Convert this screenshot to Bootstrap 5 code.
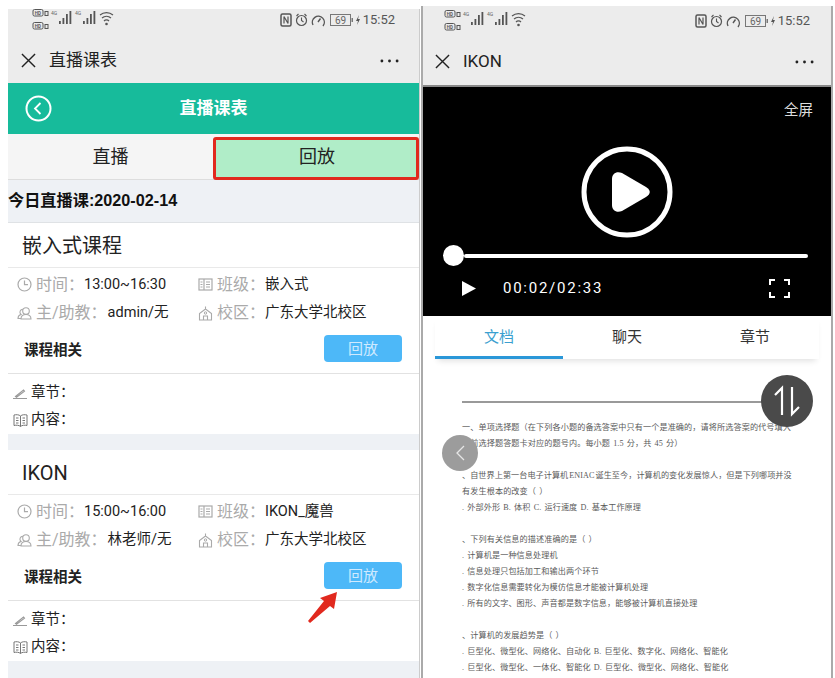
<!DOCTYPE html>
<html lang="zh">
<head>
<meta charset="utf-8">
<title>直播课表</title>
<link rel="stylesheet" href="https://cdn.jsdelivr.net/npm/bootstrap@5.3.0/dist/css/bootstrap.min.css">
<style>
html,body{height:678px;overflow:hidden}
body{background:#fff;font-family:Roboto,"Noto Sans CJK SC",sans-serif;color:#222}
.stage{padding-left:8px;height:678px}
.phone-l{width:412px;margin-top:9px;background:#eef1f5;border-right:1px solid #ccc;flex:none;position:relative}
.phone-r{width:412px;margin-top:6px;margin-left:1px;background:#fff;border-left:2px solid #aaa;border-right:2px solid #aaa;flex:none;position:relative}
.sbar{height:31px;background:#ececec;padding:0 24px 9px;color:#555;font-size:13px}
.phone-r .sbar{height:34px;padding:0 21px 4px 21px}
.tbar{height:43px;background:#ececec;padding:0 20px 2px 13px;font-size:17px;color:#222;gap:13px}
.phone-r .tbar{height:47px;padding:0 17px 2px 12px;border-bottom:2px solid #888;gap:13px}
.dots{margin-left:auto}
.teal{height:51px;background:#17bb9b;color:#fff;font-size:17px;font-weight:700;position:relative}
.teal svg{position:absolute;left:17px;top:12px}
.tabs-l{height:46px;background:#f5f5f5;border-bottom:1px solid #ddd;flex-wrap:nowrap}
.tab-a{width:205px;font-size:18px;color:#222}
.tab-b{flex:1;font-size:18px;color:#222;background:#b0edc8;border:3px solid #e1291e;border-radius:3px;margin-top:3px;margin-bottom:-1px;padding:0 0 4px 2px}
.dayline{height:43px;padding-bottom:2px;font-size:16.2px;font-weight:700;color:#111;border-bottom:1px solid #dfe2e5;font-family:"Liberation Sans","Noto Sans CJK SC",sans-serif}
.course{border:0;border-radius:0;margin-bottom:16px;height:211px;color:#222}
.ctitle{height:46px;padding:1px 0 0 14px;font-size:20px;border-bottom:1px solid #e9e9e9}
.crow{height:29px;font-size:14.5px;padding-left:9px;white-space:nowrap}
.crow1{margin-top:2px}
.cgray{color:#aaa;font-size:16px}
.cell1{width:181px}
.cell1 svg,.cell2 svg{margin-right:4px;flex:none}
.cval2{margin-left:1px}
.rel{height:47px;padding:3px 17px 0 16px;border-bottom:1px solid #e2e2e2;font-size:14.5px;font-weight:700;margin-bottom:5px}
.rel-t{margin-top:-2px}
.replay{width:78px;height:27px;padding:0;background:#4db8f8;border:0;border-radius:4px;color:#cfeaff;font-size:15px;line-height:24px;margin-top:-6px}
.cnote{height:28px;padding-left:5px;font-size:14.5px;gap:3px}
.arrow{position:absolute;left:299px;top:581px}
.video{height:229px;background:#000;color:#fff}
.fulltxt{height:59px;padding:13px 18px 0 0;font-size:14.5px;color:#ddd;text-align:right}
.bigplay{height:90px}
.slider{height:21px;margin-top:9px;padding:0 23px 0 20px}
.thumb{width:21px;height:21px;border-radius:50%;background:#fff;flex:none}
.track{height:4px;background:#fff;flex:1;border-radius:2px}
.ctrls{padding:11px 41px 0 39px;gap:27px;font-size:15px;letter-spacing:1.75px}
.ctrls svg:last-child{margin-left:auto}
.tabs-r{margin:0 12px;height:43px;box-shadow:0 5px 6px -3px rgba(0,0,0,.12);flex-wrap:nowrap}
.tabs-r .nav-item{width:128px;text-align:center;font-size:15px;color:#333;line-height:42px}
.tabs-r .on{color:#3a9fd0;border-bottom:3px solid #2a97d8;height:43px}
.doc{padding:42px 0 0 39px;color:#5a5a5a;font-family:"Liberation Serif","Noto Sans CJK SC",serif;font-size:8.15px;letter-spacing:.1px;word-spacing:1px;line-height:16px;white-space:nowrap}
.docrule{height:2px;width:331px;background:#999;margin-bottom:17px}
.doc p{margin:0}
.doc .gapl{margin-top:16px}
.doc .tight{word-spacing:-1px;letter-spacing:.05px}
.swap{position:absolute;left:338px;top:369px;width:52px;height:52px;border-radius:50%;background:#4a4a4a}
.prev{position:absolute;left:19px;top:429px;width:36px;height:36px;border-radius:50%;background:#9c9c9c}
.tiny-a{fill:#555;font-family:Roboto,sans-serif;font-size:4.5px;font-weight:700}
.tiny-b{fill:#666;font-family:Roboto,sans-serif;font-size:5px}
.tiny-c{fill:#666;font-family:Roboto,sans-serif;font-size:10px}
</style>
</head>
<body>
<svg width="0" height="0" class="position-absolute">
<symbol id="sl" viewBox="0 0 82 24">
 <g fill="none" stroke="#555" stroke-width="1"><rect x="1" y="1.500" width="10" height="6.500" rx="1.500"/><rect x="1" y="14.500" width="10" height="6.500" rx="1.500"/><rect x="13" y="3.500" width="3" height="4"/><rect x="13" y="16.500" width="3" height="4"/></g>
 <g fill="#555"><rect x="27" y="13" width="1.800" height="3"/><rect x="30.500" y="10" width="1.800" height="6"/><rect x="34" y="6" width="1.800" height="10"/><rect x="37.500" y="3" width="1.800" height="13"/><rect x="51" y="13" width="1.800" height="3"/><rect x="54.500" y="10" width="1.800" height="6"/><rect x="58" y="6" width="1.800" height="10"/><rect x="61.500" y="3" width="1.800" height="13"/></g>
 <g fill="none" stroke="#555" stroke-width="1.200"><path d="M68 7a10 10 0 0 1 13 0M70 10a7 7 0 0 1 9 0M72 13a3.500 3.500 0 0 1 5 0"/></g><circle cx="74.500" cy="16" r="1.300" fill="#555"/>
</symbol>
<symbol id="sr" viewBox="0 0 83 14">
 <rect x="1" y="1" width="10" height="12" rx="1.500" fill="none" stroke="#555" stroke-width="1.500"/><path d="M4 3.500v7M8 3.500v7M4 3.500l4 7" stroke="#555" fill="none" stroke-width="1.200"/>
 <circle cx="21.500" cy="7.500" r="5" fill="none" stroke="#555" stroke-width="1.200"/><path d="M21.500 4.500v3l2 1.500M16.500 3l2-2M26.500 3l-2-2" fill="none" stroke="#555" stroke-width="1.100"/>
 <path d="M33 12a6 6 0 1 1 10 1M38 9l2.500-3.500" fill="none" stroke="#555" stroke-width="1.400"/>
 <rect x="50.500" y="1.500" width="20" height="11" fill="none" stroke="#777" stroke-width="1"/><rect x="71.500" y="5" width="1.500" height="4" fill="#777"/>
 <path d="M79 2l-3 6h2l-1 4 3-6h-2z" fill="#555"/>
</symbol>
<symbol id="ico-x" viewBox="0 0 16 16"><path d="M1 1l14 14M15 1L1 15" stroke="#222" stroke-width="1.500" fill="none"/></symbol>
<symbol id="ico-dots" viewBox="0 0 20 4"><circle cx="2" cy="2" r="1.500" fill="#222"/><circle cx="10" cy="2" r="1.500" fill="#222"/><circle cx="18" cy="2" r="1.500" fill="#222"/></symbol>
<symbol id="ico-clock" viewBox="0 0 15 15"><circle cx="7.500" cy="7.500" r="6.500" fill="none" stroke="#aaa" stroke-width="1.200"/><path d="M7.500 3.500v4.200h3.500" fill="none" stroke="#aaa" stroke-width="1.200"/></symbol>
<symbol id="ico-class" viewBox="0 0 15 15"><rect x="1" y="2" width="13" height="11" fill="none" stroke="#aaa" stroke-width="1.200"/><path d="M6 2v11M8 5h4M8 7.500h4M8 10h4M2.500 5h2M2.500 7.500h2M2.500 10h2" fill="none" stroke="#aaa" stroke-width="1.200"/></symbol>
<symbol id="ico-users" viewBox="0 0 15 15"><circle cx="9" cy="5" r="3.300" fill="none" stroke="#aaa" stroke-width="1.100"/><path d="M4 13c0-3 2-4.500 5-4.500s5 1.500 5 4.500zM6 3.200A3 3 0 0 0 4 8.500C2 9 1 10.500 1 12.500h3" fill="none" stroke="#aaa" stroke-width="1.100"/></symbol>
<symbol id="ico-school" viewBox="0 0 15 15"><path d="M1.500 14V7.500L7.500 3l6 4.500V14zM7.500 3V.5M5.500 14v-4h4v4" fill="none" stroke="#aaa" stroke-width="1.100"/><circle cx="7.500" cy="7" r="1.200" fill="none" stroke="#aaa"/></symbol>
<symbol id="ico-pen" viewBox="0 0 15 15"><path d="M2.500 11.500l8-6.500 1 1.200-8 6zM0 13.500h14" fill="none" stroke="#999" stroke-width="1.100"/></symbol>
<symbol id="ico-book" viewBox="0 0 15 15"><path d="M7.500 3C6 1.500 3 1.500 1 2v10.500c2-.5 5-.5 6.500 1 1.500-1.500 4.500-1.500 6.500-1V2c-2-.5-5-.5-6.500 1zM7.500 3v10.500M3 5h2.500M3 7.500h2.500M3 10h2.500M9.500 5H12M9.500 7.500H12M9.500 10H12" fill="none" stroke="#777" stroke-width="1"/></symbol>
</svg>

<div class="stage d-flex">
 <section class="phone-l overflow-hidden">
  <div class="sbar d-flex align-items-center justify-content-between">
   <svg width="82" height="24" viewBox="0 0 82 24"><use href="#sl"/><text class="tiny-a" x="2.800" y="6.600">HD</text><text class="tiny-a" x="2.800" y="19.600">HD</text><text class="tiny-b" x="19" y="7">4G</text><text class="tiny-b" x="43" y="7">4G</text></svg>
   <span class="d-flex align-items-center"><svg width="83" height="14" viewBox="0 0 83 14"><use href="#sr"/><text class="tiny-c" x="60.500" y="11" text-anchor="middle">69</text></svg><span>15:52</span></span>
  </div>
  <div class="tbar d-flex align-items-center">
   <svg width="15" height="15"><use href="#ico-x"/></svg><span>直播课表</span>
   <svg class="dots" width="19" height="4"><use href="#ico-dots"/></svg>
  </div>
  <div class="teal d-flex align-items-center justify-content-center">
   <svg width="27" height="27" viewBox="0 0 27 27"><circle cx="13.500" cy="13.500" r="12" fill="none" stroke="#fff" stroke-width="2"/><path d="M15.500 8l-5.500 5.500 5.500 5.500" fill="none" stroke="#fff" stroke-width="1.800"/></svg>
   <span>直播课表</span>
  </div>
  <ul class="nav tabs-l">
   <li class="nav-item tab-a d-flex align-items-center justify-content-center">直播</li>
   <li class="nav-item tab-b d-flex align-items-center justify-content-center">回放</li>
  </ul>
  <div class="dayline d-flex align-items-center">今日直播课:2020-02-14</div>

  <div class="card course">
   <div class="ctitle d-flex align-items-center">嵌入式课程</div>
   <div class="crow crow1 d-flex align-items-center">
    <div class="cell1 d-flex align-items-center"><svg width="15" height="15"><use href="#ico-clock"/></svg><span class="cgray">时间：</span><span>13:00~16:30</span></div>
    <div class="d-flex align-items-center cell2"><svg width="15" height="15"><use href="#ico-class"/></svg><span class="cgray">班级：</span><span>嵌入式</span></div>
   </div>
   <div class="crow d-flex align-items-center">
    <div class="cell1 d-flex align-items-center"><svg width="15" height="15"><use href="#ico-users"/></svg><span class="cgray">主/助教：</span><span class="cval2">admin/无</span></div>
    <div class="d-flex align-items-center cell2"><svg width="15" height="15"><use href="#ico-school"/></svg><span class="cgray">校区：</span><span>广东大学北校区</span></div>
   </div>
   <div class="rel d-flex align-items-center justify-content-between"><span class="rel-t">课程相关</span><button class="btn replay" type="button">回放</button></div>
   <div class="cnote d-flex align-items-center"><svg width="15" height="15"><use href="#ico-pen"/></svg>章节：</div>
   <div class="cnote d-flex align-items-center"><svg width="15" height="15"><use href="#ico-book"/></svg>内容：</div>
  </div>

  <div class="card course">
   <div class="ctitle d-flex align-items-center">IKON</div>
   <div class="crow crow1 d-flex align-items-center">
    <div class="cell1 d-flex align-items-center"><svg width="15" height="15"><use href="#ico-clock"/></svg><span class="cgray">时间：</span><span>15:00~16:00</span></div>
    <div class="d-flex align-items-center cell2"><svg width="15" height="15"><use href="#ico-class"/></svg><span class="cgray">班级：</span><span>IKON_魔兽</span></div>
   </div>
   <div class="crow d-flex align-items-center">
    <div class="cell1 d-flex align-items-center"><svg width="15" height="15"><use href="#ico-users"/></svg><span class="cgray">主/助教：</span><span class="cval2">林老师/无</span></div>
    <div class="d-flex align-items-center cell2"><svg width="15" height="15"><use href="#ico-school"/></svg><span class="cgray">校区：</span><span>广东大学北校区</span></div>
   </div>
   <div class="rel d-flex align-items-center justify-content-between"><span class="rel-t">课程相关</span><button class="btn replay" type="button">回放</button></div>
   <div class="cnote d-flex align-items-center"><svg width="15" height="15"><use href="#ico-pen"/></svg>章节：</div>
   <div class="cnote d-flex align-items-center"><svg width="15" height="15"><use href="#ico-book"/></svg>内容：</div>
  </div>

  <svg class="arrow" width="34" height="34" viewBox="0 0 34 34"><path d="M1 31L17 11l-4-3L30 2l-3 17-4-3L3 33z" fill="#e1291e"/></svg>
 </section>

 <section class="phone-r overflow-hidden">
  <div class="sbar d-flex align-items-center justify-content-between">
   <svg width="82" height="24" viewBox="0 0 82 24"><use href="#sl"/><text class="tiny-a" x="2.800" y="6.600">HD</text><text class="tiny-a" x="2.800" y="19.600">HD</text><text class="tiny-b" x="19" y="7">4G</text><text class="tiny-b" x="43" y="7">4G</text></svg>
   <span class="d-flex align-items-center"><svg width="83" height="14" viewBox="0 0 83 14"><use href="#sr"/><text class="tiny-c" x="60.500" y="11" text-anchor="middle">69</text></svg><span>15:52</span></span>
  </div>
  <div class="tbar d-flex align-items-center">
   <svg width="15" height="15"><use href="#ico-x"/></svg><span>IKON</span>
   <svg class="dots" width="19" height="4"><use href="#ico-dots"/></svg>
  </div>
  <div class="video">
   <div class="fulltxt">全屏</div>
   <div class="bigplay d-flex justify-content-center">
    <svg width="92" height="92" viewBox="0 0 92 92"><circle cx="46" cy="46" r="43" fill="none" stroke="#fff" stroke-width="5"/><path d="M31 33c0-6 5-8 10-6l24 14c5 3 5 7 0 10L41 65c-5 2-10 0-10-6z" fill="#fff"/></svg>
   </div>
   <div class="slider d-flex align-items-center"><span class="thumb"></span><span class="track"></span></div>
   <div class="ctrls d-flex align-items-center">
    <svg width="14" height="15" viewBox="0 0 14 15"><path d="M0 0l14 7.500L0 15z" fill="#fff"/></svg>
    <span>00:02/02:33</span>
    <svg width="21" height="19" viewBox="0 0 21 19"><path d="M1 6V1h5M15 1h5v5M20 13v5h-5M6 18H1v-5" fill="none" stroke="#fff" stroke-width="2"/></svg>
   </div>
  </div>
  <ul class="nav tabs-r">
   <li class="nav-item on">文档</li>
   <li class="nav-item">聊天</li>
   <li class="nav-item">章节</li>
  </ul>
  <div class="doc">
   <div class="docrule"></div>
   <p>一、单项选择题（在下列各小题的备选答案中只有一个是准确的，请将所选答案的代号填入</p>
   <p>数前选择题答题卡对应的题号内。每小题 1.5 分，共 45 分）</p>
   <p class="gapl tight">、自世界上第一台电子计算机 ENIAC 诞生至今，计算机的变化发展惊人，但是下列哪项并没</p>
   <p>有发生根本的改变（ ）</p>
   <p>. 外部外形 B. 体积 C. 运行速度 D. 基本工作原理</p>
   <p class="gapl">、下列有关信息的描述准确的是（ ）</p>
   <p>. 计算机是一种信息处理机</p>
   <p>. 信息处理只包括加工和输出两个环节</p>
   <p>. 数字化信息需要转化为模仿信息才能被计算机处理</p>
   <p>. 所有的文字、图形、声音都是数字信息，能够被计算机直接处理</p>
   <p class="gapl">、计算机的发展趋势是（ ）</p>
   <p>. 巨型化、微型化、网络化、自动化 B. 巨型化、数字化、网络化、智能化</p>
   <p>. 巨型化、微型化、一体化、智能化 D. 巨型化、微型化、网络化、智能化</p>
  </div>
  <div class="swap d-flex align-items-center justify-content-center"><svg width="30" height="32" viewBox="0 0 30 32"><path d="M10 30V3L3 10M20 2v27l7-7" fill="none" stroke="#fff" stroke-width="2.200"/></svg></div>
  <div class="prev d-flex align-items-center justify-content-center"><svg width="12" height="18" viewBox="0 0 12 18"><path d="M10 2L3 9l7 7" fill="none" stroke="#e6e6e6" stroke-width="1.300"/></svg></div>
 </section>
</div>
<script src="https://cdn.jsdelivr.net/npm/bootstrap@5.3.0/dist/js/bootstrap.bundle.min.js"></script>
</body>
</html>
